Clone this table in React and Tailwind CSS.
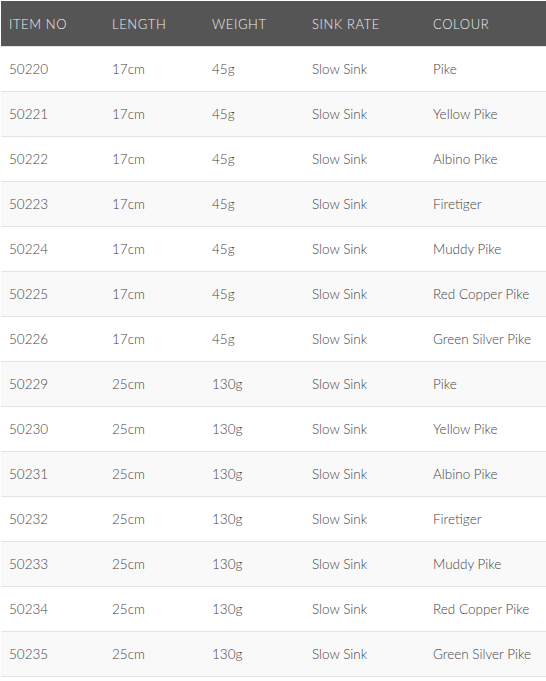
import React from 'react';

// Product spec rows
const rows = [
  ['50220', '17cm', '45g', 'Slow Sink', 'Pike'],
  ['50221', '17cm', '45g', 'Slow Sink', 'Yellow Pike'],
  ['50222', '17cm', '45g', 'Slow Sink', 'Albino Pike'],
  ['50223', '17cm', '45g', 'Slow Sink', 'Firetiger'],
  ['50224', '17cm', '45g', 'Slow Sink', 'Muddy Pike'],
  ['50225', '17cm', '45g', 'Slow Sink', 'Red Copper Pike'],
  ['50226', '17cm', '45g', 'Slow Sink', 'Green Silver Pike'],
  ['50229', '25cm', '130g', 'Slow Sink', 'Pike'],
  ['50230', '25cm', '130g', 'Slow Sink', 'Yellow Pike'],
  ['50231', '25cm', '130g', 'Slow Sink', 'Albino Pike'],
  ['50232', '25cm', '130g', 'Slow Sink', 'Firetiger'],
  ['50233', '25cm', '130g', 'Slow Sink', 'Muddy Pike'],
  ['50234', '25cm', '130g', 'Slow Sink', 'Red Copper Pike'],
  ['50235', '25cm', '130g', 'Slow Sink', 'Green Silver Pike'],
];

const headers = ['ITEM NO', 'LENGTH', 'WEIGHT', 'SINK RATE', 'COLOUR'];
const widths = ['w-[103px]', 'w-[100px]', 'w-[100px]', 'w-[121px]', ''];

function App() {
  return (
    <div className="w-[546px] bg-white p-[1px] pr-0 font-['Lato',sans-serif]">
      <table className="w-full border-collapse text-left">
        <thead>
          <tr className="h-[45px] bg-[#555555] border-b border-[#e2e2e2]">
            {headers.map((h, i) => (
              <th key={h} className={`${widths[i]} pl-[8px] pt-[3px] text-[13px] font-light tracking-[0.6px] text-[#eeeeee]`}>{h}</th>
            ))}
          </tr>
        </thead>
        <tbody>
          {rows.map((r, i) => (
            <tr key={r[0]} className={`h-[45px] border-b border-[#e2e2e2] ${i % 2 ? 'bg-[#f9f9f9]' : 'bg-white'}`}>
              {r.map((c, j) => (
                <td key={j} className="pl-[8px] pt-[2px] text-[13.5px] font-light text-[#444444]">{c}</td>
              ))}
            </tr>
          ))}
        </tbody>
      </table>
    </div>
  );
}

export default App;
